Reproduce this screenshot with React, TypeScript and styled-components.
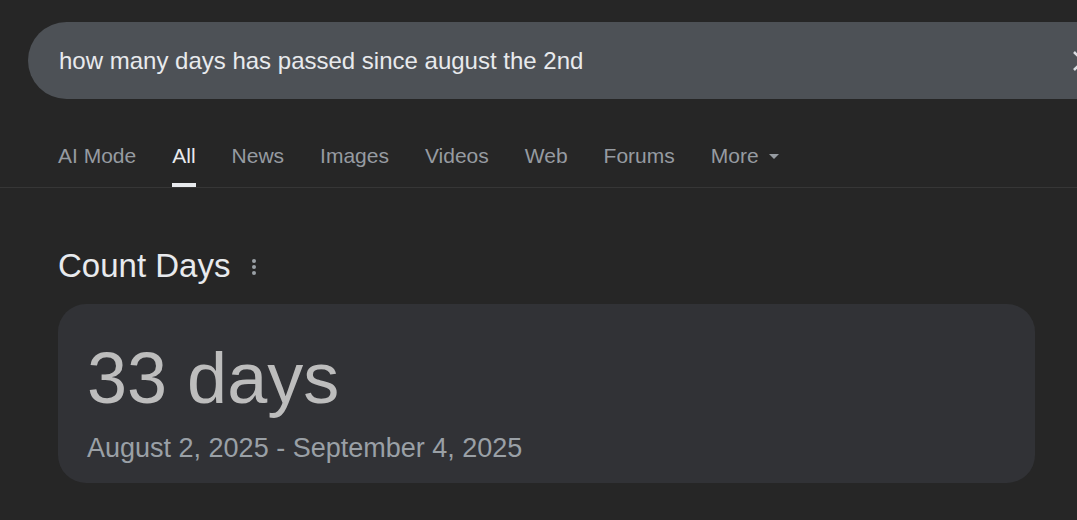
import styled, { createGlobalStyle } from "styled-components";

const tabs = ["AI Mode", "All", "News", "Images", "Videos", "Web", "Forums", "More"];

export default function App() {
  return (
    <>
      <GlobalStyle />
      <Page>
        <Header>
          <SearchBar>
            <Query>how many days has passed since august the 2nd</Query>
            <ClearIcon viewBox="0 0 20 20" aria-hidden>
              <path d="M1 1 L19 19 M19 1 L1 19" />
            </ClearIcon>
          </SearchBar>
        </Header>

        <Nav>
          {tabs.map((t) => (
            <Tab key={t} $active={t === "All"}>
              {t}
              {t === "More" && <Caret />}
            </Tab>
          ))}
        </Nav>

        <Result>
          <TitleRow>
            <Title>Count Days</Title>
            <MenuIcon viewBox="0 0 6 18" aria-hidden>
              <circle cx="3" cy="3" r="2" />
              <circle cx="3" cy="9" r="2" />
              <circle cx="3" cy="15" r="2" />
            </MenuIcon>
          </TitleRow>
          <Card>
            <Count>33 days</Count>
            <Range>August 2, 2025 - September 4, 2025</Range>
          </Card>
        </Result>
      </Page>
    </>
  );
}

const GlobalStyle = createGlobalStyle`
  html, body {
    margin: 0;
    background: #262626;
    overflow: hidden;
  }
  body {
    font-family: "Liberation Sans", Arial, sans-serif;
  }
`;

const Page = styled.div`
  width: 1077px;
  height: 520px;
  overflow: hidden;
  background: #262626;
`;

const Header = styled.header`
  padding: 22px 0 0 28px;
`;

const SearchBar = styled.div`
  display: flex;
  align-items: center;
  height: 77px;
  margin-right: -60px;
  padding: 0 44px 0 31px;
  border-radius: 39px 0 0 39px;
  background: #4d5156;
`;

const Query = styled.div`
  flex: 1;
  font-size: 24px;
  color: #e8eaed;
`;

const ClearIcon = styled.svg`
  width: 20px;
  height: 20px;
  fill: none;
  stroke: #dadce0;
  stroke-width: 2.6;
`;

const Nav = styled.nav`
  display: flex;
  gap: 36px;
  padding: 45px 0 0 58px;
  border-bottom: 1px solid #363636;
`;

const Tab = styled.div<{ $active?: boolean }>`
  position: relative;
  display: flex;
  align-items: center;
  gap: 10px;
  font-size: 21px;
  line-height: 24px;
  padding-bottom: 19px;
  color: ${(p) => (p.$active ? "#e8eaed" : "#969ba1")};

  &::after {
    content: "";
    display: ${(p) => (p.$active ? "block" : "none")};
    position: absolute;
    left: 0;
    right: 0;
    bottom: 0;
    height: 4px;
    background: #e8eaed;
  }
`;

const Caret = styled.span`
  width: 0;
  height: 0;
  border-left: 5px solid transparent;
  border-right: 5px solid transparent;
  border-top: 5px solid #969ba1;
  margin-top: 1px;
`;

const Result = styled.section`
  padding: 59px 42px 0 58px;
`;

const TitleRow = styled.div`
  display: flex;
  align-items: center;
  gap: 21px;
  margin-bottom: 20px;
`;

const Title = styled.h2`
  margin: 0;
  font-size: 33px;
  font-weight: 400;
  line-height: 37px;
  color: #e8eaed;
`;

const MenuIcon = styled.svg`
  width: 6px;
  height: 18px;
  fill: #9aa0a6;
  margin-top: 2px;
`;

const Card = styled.div`
  width: 977px;
  box-sizing: border-box;
  padding: 38px 29px 19px;
  border-radius: 28px;
  background: #313236;
`;

const Count = styled.div`
  font-size: 72px;
  line-height: 72px;
  color: #bdbdbd;
  margin-bottom: 19px;
`;

const Range = styled.div`
  font-size: 27px;
  line-height: 31px;
  color: #9aa0a6;
`;
